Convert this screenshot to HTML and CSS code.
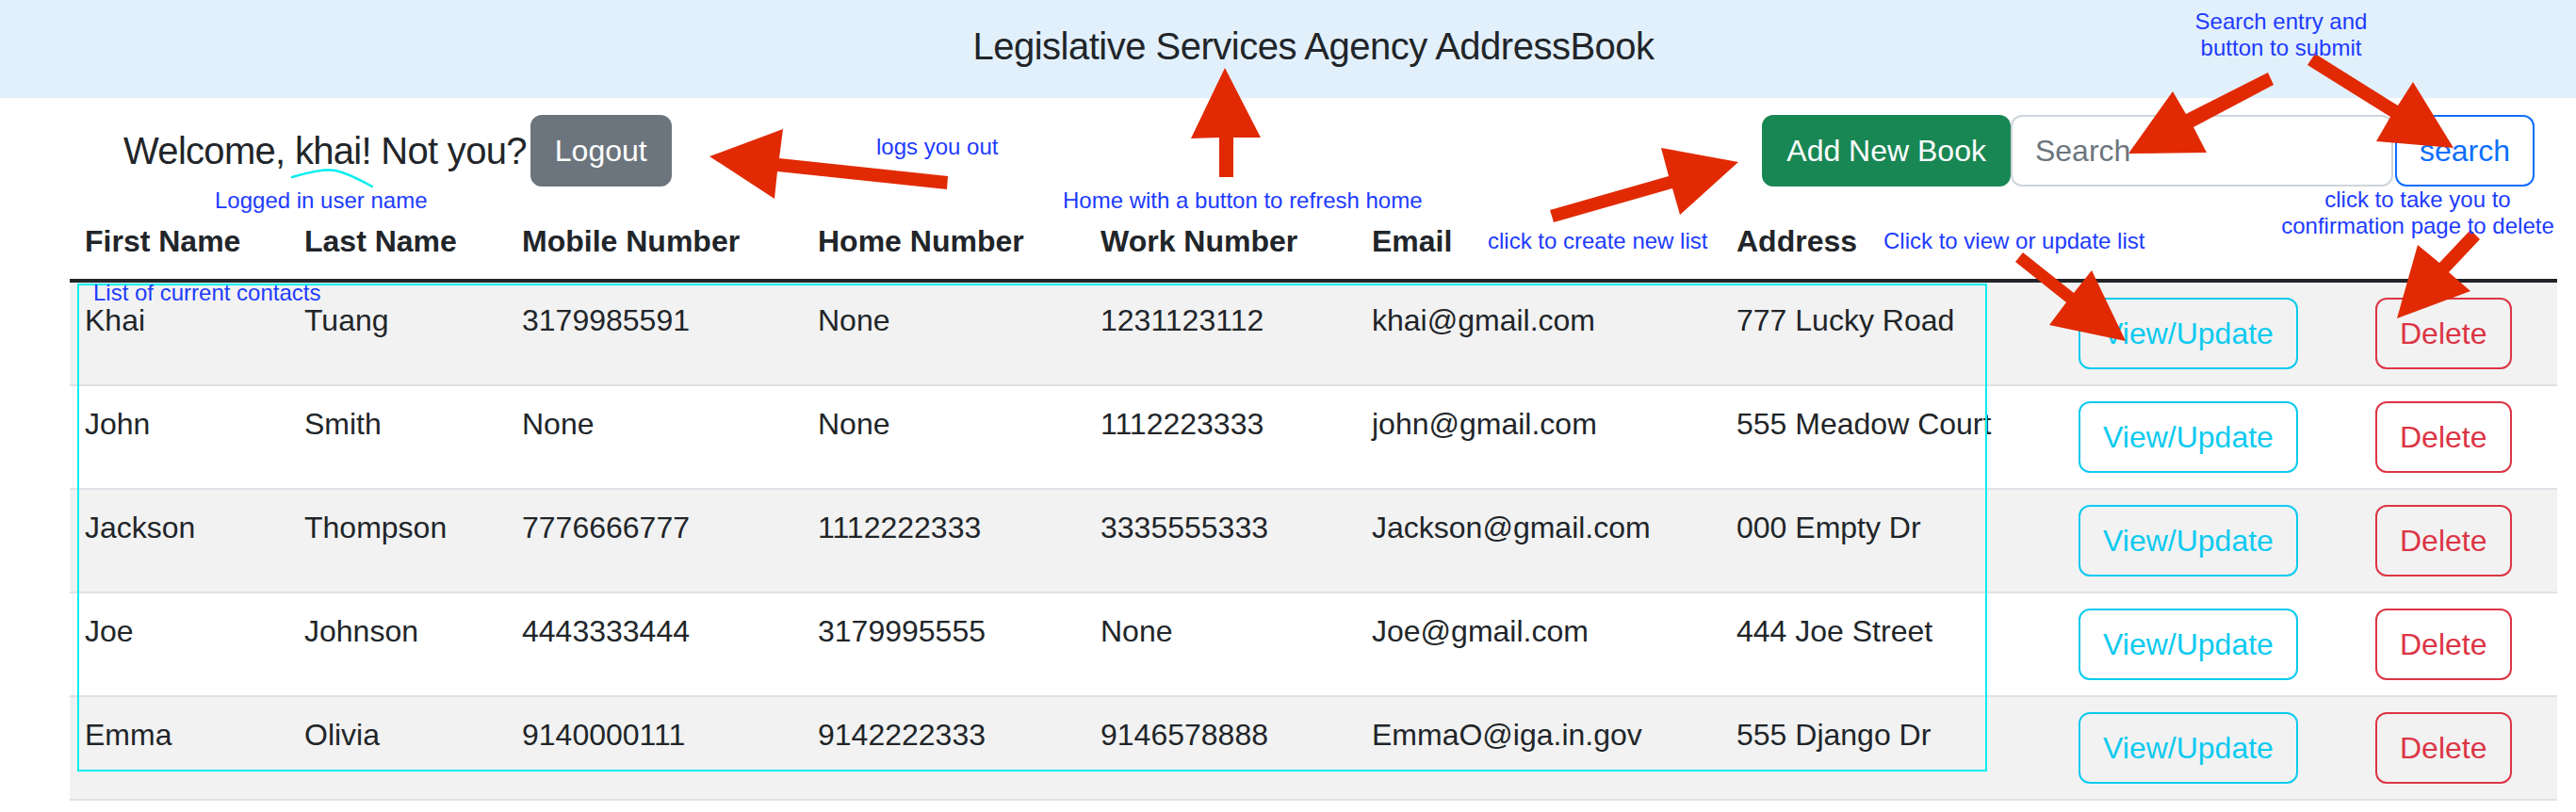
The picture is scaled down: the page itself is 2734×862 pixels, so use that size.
FILE: index.html
```html
<!DOCTYPE html>
<html lang="en">
<head>
<meta charset="utf-8">
<title>Legislative Services Agency AddressBook</title>
<link rel="stylesheet" href="styles.css">
</head>
<body>
<header class="site-header">
  <a class="home-link" href="#">Legislative Services Agency AddressBook</a>
</header>

<div class="toolbar">
  <div class="user-box">
    <span class="welcome">Welcome, khai! Not you?</span>
    <button type="button" class="btn btn-secondary">Logout</button>
  </div>
  <form class="actions">
    <button type="button" class="btn btn-success">Add New Book</button>
    <input class="search-input" type="text" placeholder="Search">
    <button type="button" class="btn btn-outline-primary">search</button>
  </form>
</div>

<div class="table-wrap">
  <table class="contacts">
    <colgroup>
      <col class="col-first">
      <col class="col-last">
      <col class="col-mobile">
      <col class="col-home">
      <col class="col-work">
      <col class="col-email">
      <col class="col-address">
      <col class="col-view">
      <col class="col-delete">
    </colgroup>
    <thead>
      <tr>
        <th>First Name</th>
        <th>Last Name</th>
        <th>Mobile Number</th>
        <th>Home Number</th>
        <th>Work Number</th>
        <th>Email</th>
        <th>Address</th>
        <th></th>
        <th></th>
      </tr>
    </thead>
    <tbody>
      <tr>
        <td>Khai</td><td>Tuang</td><td>3179985591</td><td>None</td><td>1231123112</td><td>khai@gmail.com</td><td>777 Lucky Road</td>
        <td><button type="button" class="btn btn-outline-info">View/Update</button></td>
        <td><button type="button" class="btn btn-outline-danger">Delete</button></td>
      </tr>
      <tr>
        <td>John</td><td>Smith</td><td>None</td><td>None</td><td>1112223333</td><td>john@gmail.com</td><td>555 Meadow Court</td>
        <td><button type="button" class="btn btn-outline-info">View/Update</button></td>
        <td><button type="button" class="btn btn-outline-danger">Delete</button></td>
      </tr>
      <tr>
        <td>Jackson</td><td>Thompson</td><td>7776666777</td><td>1112222333</td><td>3335555333</td><td>Jackson@gmail.com</td><td>000 Empty Dr</td>
        <td><button type="button" class="btn btn-outline-info">View/Update</button></td>
        <td><button type="button" class="btn btn-outline-danger">Delete</button></td>
      </tr>
      <tr>
        <td>Joe</td><td>Johnson</td><td>4443333444</td><td>3179995555</td><td>None</td><td>Joe@gmail.com</td><td>444 Joe Street</td>
        <td><button type="button" class="btn btn-outline-info">View/Update</button></td>
        <td><button type="button" class="btn btn-outline-danger">Delete</button></td>
      </tr>
      <tr>
        <td>Emma</td><td>Olivia</td><td>9140000111</td><td>9142222333</td><td>9146578888</td><td>EmmaO@iga.in.gov</td><td>555 Django Dr</td>
        <td><button type="button" class="btn btn-outline-info">View/Update</button></td>
        <td><button type="button" class="btn btn-outline-danger">Delete</button></td>
      </tr>
    </tbody>
  </table>
</div>

<div class="annotations">
  <svg class="marks" width="2734" height="862" viewBox="0 0 2734 862" xmlns="http://www.w3.org/2000/svg">
    <rect x="83" y="302" width="2025" height="516" fill="none" stroke="#00eef0" stroke-width="2"/>
    <path d="M310 188 C 328 183 344 179 356 181 C 370 184 384 192 395 198" fill="none" stroke="#00eef0" stroke-width="2.5" stroke-linecap="round"/>
    <g fill="#e12a03">
      <polygon points="753,166 831,137 827,168 1006,187 1005,201 825,182 822,211"/>
      <polygon points="1300,72 1338,146 1309,146 1309,188 1294,188 1294,146 1264,147"/>
      <polygon points="1845,172 1783,228 1775,200 1649,236 1645,223 1771,187 1763,157"/>
      <polygon points="2259,163 2306,97 2320,121 2407,77 2413,90 2328,135 2342,162"/>
      <polygon points="2604,157 2561,87 2545,112 2457,57 2449,69 2537,124 2522,150"/>
      <polygon points="2256,362 2220,287 2201,311 2147,268 2139,278 2193,321 2175,345"/>
      <polygon points="2544,338 2566,260 2589,279 2622,244 2632,254 2599,289 2622,309"/>
    </g>
  </svg>
  <span class="note n-search">Search entry and<br>button to submit</span>
  <span class="note n-logout">logs you out</span>
  <span class="note n-logged">Logged in user name</span>
  <span class="note n-home">Home with a button to refresh home</span>
  <span class="note n-create">click to create new list</span>
  <span class="note n-view">Click to view or update list</span>
  <span class="note n-delete">click to take you to<br>confirmation page to delete</span>
  <span class="note n-list">List of current contacts</span>
</div>
</body>
</html>
```

FILE: styles.css
```css
* {
  box-sizing: border-box;
}

html,
body {
  margin: 0;
  padding: 0;
}

body {
  position: relative;
  width: 2734px;
  height: 862px;
  overflow: hidden;
  font-family: "Liberation Sans", Arial, sans-serif;
  font-size: 32px;
  line-height: 48px;
  color: #212529;
  background: #ffffff;
}

/* Header band */
.site-header {
  height: 104px;
  padding: 25px 0 0 54px;
  background: #e2f0fc;
  text-align: center;
  font-size: 40px;
  line-height: 48px;
}

.home-link {
  color: #212529;
  text-decoration: none;
  letter-spacing: -0.5px;
}

/* Toolbar row */
.toolbar {
  display: flex;
  justify-content: space-between;
  align-items: center;
  height: 76px;
  margin-top: 18px;
  padding: 0 44px 0 131px;
}

.user-box {
  display: flex;
  align-items: center;
  gap: 4px;
}

.welcome {
  font-size: 40px;
  line-height: 48px;
  letter-spacing: -0.7px;
}

.actions {
  display: flex;
  align-items: center;
  margin: 0;
}

.btn {
  display: inline-block;
  font-family: inherit;
  font-size: 32px;
  line-height: 48px;
  padding: 12px 24px;
  border: 2px solid transparent;
  border-radius: 12px;
  background: transparent;
  vertical-align: top;
  white-space: nowrap;
  cursor: pointer;
}

.btn-secondary {
  background: #6c757d;
  border-color: #6c757d;
  color: #ffffff;
}

.btn-success {
  background: #198754;
  border-color: #198754;
  color: #ffffff;
}

.btn-outline-primary {
  border-color: #0d6efd;
  color: #0d6efd;
  margin-left: 2px;
}

.btn-outline-info {
  border-color: #0dcaf0;
  color: #0dcaf0;
}

.btn-outline-danger {
  border-color: #dc3545;
  color: #dc3545;
}

.search-input {
  width: 406px;
  height: 76px;
  padding: 12px 24px;
  font-family: inherit;
  font-size: 32px;
  line-height: 48px;
  color: #212529;
  background: #ffffff;
  border: 2px solid #ced4da;
  border-radius: 12px;
  outline: none;
}

.search-input::placeholder {
  color: #6c757d;
}

/* Contacts table */
.table-wrap {
  margin-top: 18px;
  padding: 0 20px 0 74px;
}

.contacts {
  width: 100%;
  table-layout: fixed;
  border-collapse: separate;
  border-spacing: 0;
}

.col-first { width: 233px; }
.col-last { width: 231px; }
.col-mobile { width: 314px; }
.col-home { width: 300px; }
.col-work { width: 288px; }
.col-email { width: 387px; }
.col-address { width: 363px; }
.col-view { width: 315px; }
.col-delete { width: 209px; }

.contacts th,
.contacts td {
  padding: 16px;
  text-align: left;
  vertical-align: top;
  white-space: nowrap;
}

.contacts th {
  font-weight: 700;
  border-bottom: 4px solid #212529;
}

.contacts td {
  border-bottom: 2px solid #dee2e6;
}

.contacts tbody tr:nth-child(odd) td {
  background: #f2f2f2;
}

/* Screenshot annotations overlay */
.annotations {
  position: absolute;
  left: 0;
  top: 0;
  width: 2734px;
  height: 862px;
  pointer-events: none;
}

.marks {
  position: absolute;
  left: 0;
  top: 0;
}

.note {
  position: absolute;
  font-family: "Liberation Sans", Arial, sans-serif;
  font-size: 24px;
  line-height: 28px;
  color: #1d3bff;
  white-space: nowrap;
}

.n-search {
  left: 2271px;
  top: 9px;
  width: 300px;
  text-align: center;
}

.n-logout {
  left: 930px;
  top: 142px;
}

.n-logged {
  left: 228px;
  top: 199px;
}

.n-home {
  left: 1128px;
  top: 199px;
}

.n-create {
  left: 1579px;
  top: 242px;
}

.n-view {
  left: 1999px;
  top: 242px;
}

.n-delete {
  left: 2406px;
  top: 198px;
  width: 320px;
  text-align: center;
}

.n-list {
  left: 99px;
  top: 297px;
}
```
